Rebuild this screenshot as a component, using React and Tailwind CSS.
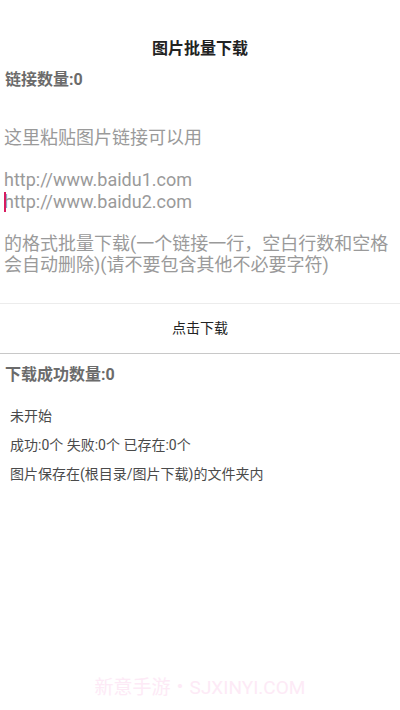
export default function App() {
  const font = { fontFamily: 'Roboto, "Noto Sans CJK SC", "Noto Sans", sans-serif' };
  return (
    <div className="relative w-[400px] h-[710px] bg-white overflow-hidden" style={font}>
      <div className="pt-[37px] h-[61px] text-center text-[16px] leading-[24px] font-bold text-[#222]">
        图片批量下载
      </div>
      <div className="mt-[8px] px-[5px] text-[16px] leading-[22px] font-bold text-[#6b6b6b]">
        链接数量:0
      </div>
      <div className="mt-[36px] px-[4px] text-[18px] leading-[21.2px] text-[#9a9a9a]">
        <div>这里粘贴图片链接可以用</div>
        <div className="h-[21.2px]"></div>
        <div>http://www.baidu1.com</div>
        <div className="relative">
          <span className="absolute left-0 top-[1px] w-[2px] h-[20px] bg-[#d81b60]"></span>
          http://www.baidu2.com
        </div>
        <div className="h-[21.2px]"></div>
        <div>的格式批量下载(一个链接一行，空白行数和空格会自动删除)(请不要包含其他不必要字符)</div>
      </div>
      <div className="mt-[28px] border-t border-[#ececec]"></div>
      <div className="h-[49px] flex items-center justify-center text-[14px] text-[#222]">
        点击下载
      </div>
      <div className="border-t border-[#c8c8c8]"></div>
      <div className="mt-[10px] px-[5px] text-[16px] leading-[22px] font-bold text-[#6b6b6b]">
        下载成功数量:0
      </div>
      <div className="mt-[20px] px-[10px] flex flex-col gap-[9px] text-[14px] leading-[20px] text-[#4a4a4a]">
        <div>未开始</div>
        <div>成功:0个 失败:0个 已存在:0个</div>
        <div>图片保存在(根目录/图片下载)的文件夹内</div>
      </div>
      <div className="absolute left-0 right-0 top-[676px] text-center text-[19px] leading-[24px] text-[#fdeaf6]">
        新意手游・SJXINYI.COM
      </div>
    </div>
  );
}
